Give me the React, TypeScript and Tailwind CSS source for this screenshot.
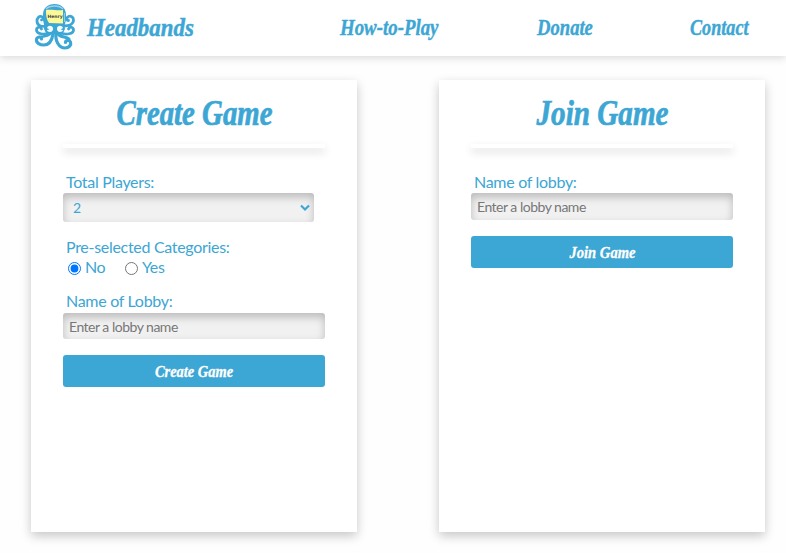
import type { ReactNode } from "react";

const script = "font-['Liberation_Serif'] font-bold italic whitespace-nowrap";

function Octopus() {
  return (
    <svg viewBox="0 0 54 54" className="block h-[54px] w-[54px] shrink-0" fill="none">
      <path d="M15 19v-4C15 8 19.500 4 26.500 4S38 8 38 15v4c0 3-2 6-1 10l-3 6-7.500-1-7.500 1-3-6c1-4-1-7-1-10Z" fill="#3ca6d4" />
      <g stroke="#3ca6d4" strokeLinecap="round">
        <path d="M18 26c-4 1-9 0-9-5 0-3 2-5 4.500-4.500 2 .5 2 3 0 3.500" strokeWidth="2.800" />
        <path d="M36 26c5 0 9.500-2 9.500-6 0-3-3-4.500-5-3.500-2.500 1-2 4 0 4" strokeWidth="2.800" />
        <path d="M21 33c-5 2-12.500 1-12.500-3 0-3 4-4 5-1" strokeWidth="2.800" />
        <path d="M33 33c5 2 12.500 1 12.500-3 0-3-4-4-5-1" strokeWidth="2.800" />
        <path d="M25 34c-1 6-4 11-9 11-4 0-8-2-7.500-5.500.5-3 5-3.500 5-.5" strokeWidth="3.200" />
        <path d="M22 34c-3 3-7 2-10 3" strokeWidth="2.500" />
        <path d="M28 33c-1 8 3 15 9 15 4 0 6.500-3 5.500-6-1-2.500-5-2-5 .5" strokeWidth="3.200" />
        <path d="M30 34c3 4 8 2 11 5" strokeWidth="3" />
      </g>
      <path d="M18 9c4-4 13-4 17 0" stroke="#9bd0e8" strokeWidth="1.5" />
      <path d="M36.500 13v9" stroke="#8bcce8" />
      <path d="M18 10c5-1 12 1 17 0v13.500l-14-.5c-2-3-3-6-3-13Z" fill="#fbf998" />
      <text x="27" y="17.500" textAnchor="middle" fontSize="4.500" fontWeight="bold" fill="#444" fontFamily="DejaVu Sans">Henry</text>
      <path d="M19 28c1-3 5-3 6 0 .5 2-1 4-3 4-1.500 0-3-1-3-2l2.500-.5Z" fill="#f3fbff" />
      <path d="M35 28c-1-3-5-3-6 0-.5 2 1 4 3 4 1.500 0 3-1 3-2l-2.500-.5Z" fill="#f3fbff" />
    </svg>
  );
}

function Card({ title, children }: { title: ReactNode; children: ReactNode }) {
  return (
    <section className="h-[452px] w-[326px] bg-white px-8 shadow-[0_4px_10px_rgba(0,0,0,0.22)]">
      <h1 className={`${script} flex h-16 items-center justify-center pt-0.5 text-[36px] leading-none [-webkit-text-stroke:0.7px_#3ca6d4]`}>{title}</h1>
      <div className="relative h-1 bg-white shadow-[0_4px_8px_rgba(0,0,0,0.16)]" />
      {children}
    </section>
  );
}

function Label({ children }: { children: ReactNode }) {
  return <div className="h-5 pl-[3px] text-[16px] leading-[18px] tracking-[-0.3px] whitespace-nowrap">{children}</div>;
}

const field = "block rounded-[3px] bg-[#f1f1f1] shadow-[inset_0_4px_8px_rgba(0,0,0,0.23)] outline-none";

function LobbyInput({ height }: { height: string }) {
  return (
    <input
      placeholder="Enter a lobby name"
      className={`${field} ${height} w-[262px] px-1.5 text-[14px] tracking-[-0.5px] placeholder:text-[#777]`}
    />
  );
}

function Button({ children }: { children: ReactNode }) {
  return (
    <button className={`${script} mt-4 flex h-8 w-[262px] items-center justify-center rounded-[3px] bg-[#3ca6d4] pt-0.5 text-[17px] text-white [-webkit-text-stroke:0.3px_white]`}>
      {children}
    </button>
  );
}

export default function App() {
  return (
    <div className="h-[553px] w-[786px] overflow-hidden bg-[#fefefe] font-['Lato',sans-serif] text-[#3ca6d4]">
      <header className="flex h-14 bg-white pl-7 shadow-[0_2px_8px_rgba(0,0,0,0.15)]">
        <Octopus />
        <div className={`${script} ml-[5px] w-[253px] pt-2.5 text-[26px] leading-9 [-webkit-text-stroke:0.5px_#3ca6d4]`}>
          <span className="inline-block origin-left scale-x-[0.88]">Headbands</span>
        </div>
        <nav className={`${script} flex pt-2.5 text-[23px] leading-9 [-webkit-text-stroke:0.4px_#3ca6d4]`}>
          <a className="w-[197px]"><span className="inline-block origin-left scale-x-[0.82]">How-to-Play</span></a>
          <a className="w-[153px]"><span className="inline-block origin-left scale-x-[0.81]">Donate</span></a>
          <a className="w-[60px]"><span className="inline-block origin-left scale-x-[0.79]">Contact</span></a>
        </nav>
      </header>

      <main className="flex gap-[82px] pt-6 pl-[31px]">
        <Card title={<span className="inline-block scale-x-[0.8]">Create Game</span>}>
          <div className="mt-[25px]">
            <Label>Total Players:</Label>
            <div className={`${field} flex h-[29px] w-[251px] items-center justify-between pr-1 pl-[10px] text-[14px]`}>
              <span>2</span>
              <svg viewBox="0 0 10 8" className="h-2 w-[10px]" fill="none" stroke="#3ca6d4" strokeWidth="2.2">
                <path d="m1 1.5 4 4 4-4" />
              </svg>
            </div>
          </div>
          <div className="mt-4">
            <Label>Pre-selected Categories:</Label>
            <div className="flex h-[18px] items-center pl-[5px] text-[16px] leading-[18px] tracking-[-0.4px]">
              <input type="radio" name="categories" defaultChecked className="mt-[3px] h-[13px] w-[13px]" />
              <span className="-mt-px ml-1 w-10">No</span>
              <input type="radio" name="categories" className="mt-[3px] h-[13px] w-[13px]" />
              <span className="-mt-px ml-1">Yes</span>
            </div>
          </div>
          <div className="mt-4">
            <Label>Name of Lobby:</Label>
            <div className="pt-px">
              <LobbyInput height="h-[26px]" />
            </div>
          </div>
          <Button><span className="inline-block scale-x-[0.85]">Create Game</span></Button>
        </Card>

        <Card title={<span className="inline-block translate-x-px scale-x-[0.81]">Join Game</span>}>
          <div className="mt-[25px]">
            <Label>Name of lobby:</Label>
            <LobbyInput height="h-[27px]" />
          </div>
          <Button><span className="inline-block scale-x-[0.86]">Join Game</span></Button>
        </Card>
      </main>
    </div>
  );
}
